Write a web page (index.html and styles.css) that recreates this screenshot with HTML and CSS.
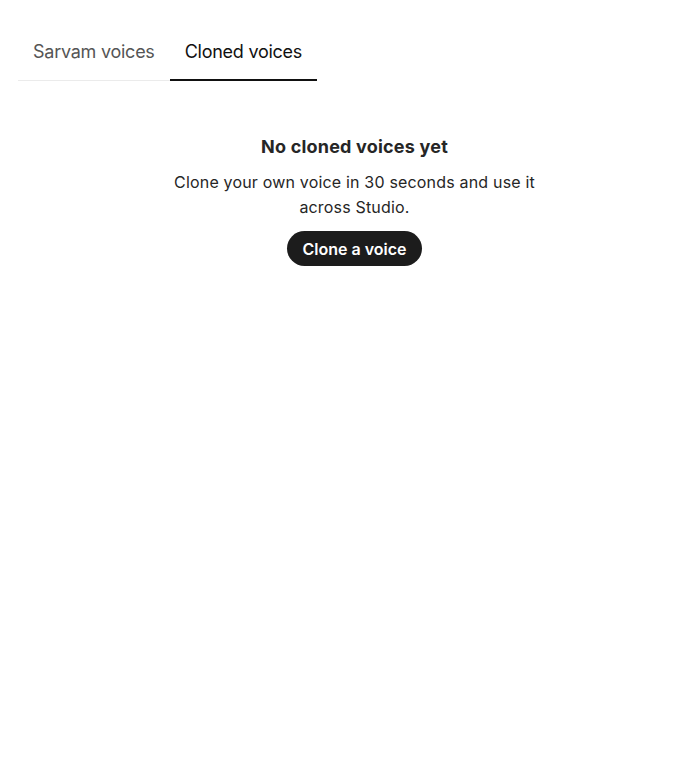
FILE: index.html
```html
<!DOCTYPE html>
<html lang="en">
<head>
<meta charset="utf-8">
<title>Cloned voices</title>
<link rel="stylesheet" href="styles.css">
</head>
<body>
<div class="page">
  <div class="tabs">
    <button class="tab">Sarvam voices</button>
    <button class="tab active">Cloned voices</button>
  </div>
  <div class="empty">
    <h2 class="empty-title">No cloned voices yet</h2>
    <p class="empty-text">Clone your own voice in 30 seconds and use it<br>across Studio.</p>
    <button class="btn">Clone a voice</button>
  </div>
</div>
</body>
</html>
```
FILE: styles.css
```css
html, body {
  margin: 0;
  padding: 0;
  background: #ffffff;
}
body {
  font-family: Inter, "Noto Sans", sans-serif;
  color: #1f1f1f;
}
.page {
  margin-left: 18px;
  width: 673px;
  padding-top: 31px;
}
.tabs {
  display: flex;
  width: fit-content;
  border-bottom: 1px solid #ebebeb;
}
.tab {
  font-family: inherit;
  font-size: 18px;
  letter-spacing: -0.25px;
  white-space: nowrap;
  flex-shrink: 0;
  background: none;
  border: none;
  padding: 10px 15px 16px;
  margin-bottom: -1px;
  color: #555555;
  border-bottom: 2px solid transparent;
  cursor: pointer;
  line-height: 22px;
}
.tab.active {
  color: #111111;
  border-bottom-color: #111111;
}
.empty {
  display: flex;
  flex-direction: column;
  align-items: center;
  padding-top: 54px;
}
.empty-title {
  margin: 0;
  font-size: 18px;
  font-weight: 700;
  color: #262626;
  line-height: 24px;
  letter-spacing: 0.2px;
}
.empty-text {
  margin: 11px 0 0;
  font-size: 16px;
  line-height: 25px;
  text-align: center;
  color: #262626;
  letter-spacing: 0.18px;
}
.btn {
  margin-top: 11px;
  font-family: inherit;
  font-size: 16px;
  font-weight: 600;
  color: #ffffff;
  background: #1c1c1c;
  border: none;
  border-radius: 999px;
  height: 35px;
  padding: 0 15px;
}
```
